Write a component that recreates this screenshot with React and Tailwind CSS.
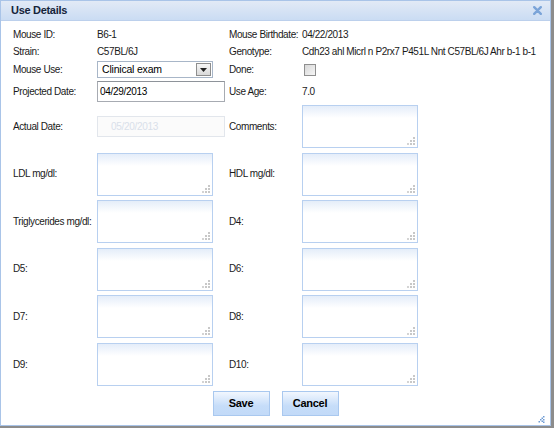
import React from "react";

const font = { fontFamily: '"Liberation Sans", Arial, sans-serif' };

const Label = ({ children }) => (
  <div className="text-[10px] tracking-[-0.4px] text-[#1a1a1a] leading-none">{children}</div>
);

const Grip = () => (
  <svg className="absolute right-[2px] bottom-[2px]" width="9" height="9" viewBox="0 0 9 9">
    <rect x="7" y="1" width="2" height="2" fill="#c8c8c8" />
    <rect x="4" y="4" width="2" height="2" fill="#c8c8c8" />
    <rect x="7" y="4" width="2" height="2" fill="#c8c8c8" />
    <rect x="1" y="7" width="2" height="2" fill="#d4d4d4" />
    <rect x="4" y="7" width="2" height="2" fill="#c8c8c8" />
    <rect x="7" y="7" width="2" height="2" fill="#c8c8c8" />
  </svg>
);

const Area = () => (
  <div className="relative w-[116px] h-[43px] border border-[#b8d0f0] bg-[linear-gradient(to_bottom,#e4edf9,#ffffff_12px)]">
    <Grip />
  </div>
);

const Row = ({ l1, v1, l2, v2, h = "h-[43px]" }) => (
  <div className={`grid grid-cols-[84px_132px_73px_1fr] items-center ${h}`}>
    <Label>{l1}</Label>
    <div>{v1}</div>
    <Label>{l2}</Label>
    <div>{v2}</div>
  </div>
);

export default function App() {
  return (
    <div className="w-[554px] h-[428px] bg-[#8c8c8c]" style={font}>
      <div className="w-[551px] h-[426px] bg-white border border-[#a9c4e8] flex flex-col">
        {/* title bar */}
        <div className="h-[22px] flex items-center justify-between pl-[10px] pr-[8px] bg-[linear-gradient(to_bottom,#e2eaf6,#cadcf3)] border-b border-[#bcd0ec]">
          <span className="text-[11px] font-bold tracking-[-0.3px] text-[#15243a]">Use Details</span>
          <svg width="9" height="9" viewBox="0 0 9 9">
            <path d="M1.2 1.2 L7.8 7.8 M7.8 1.2 L1.2 7.8" stroke="#7ba4d8" strokeWidth="2.4" strokeLinecap="round" />
          </svg>
        </div>

        <div className="pl-[12px] pt-[5px] flex flex-col">
          <Row h="h-[17px]" l1="Mouse ID:" v1={<Label>B6-1</Label>} l2="Mouse Birthdate:" v2={<Label>04/22/2013</Label>} />
          <Row h="h-[17px]" l1="Strain:" v1={<Label>C57BL/6J</Label>} l2="Genotype:" v2={<Label>Cdh23 ahl Micrl n P2rx7 P451L Nnt C57BL/6J Ahr b-1 b-1</Label>} />
          <Row
            h="h-[19px]"
            l1="Mouse Use:"
            v1={
              <div className="w-[116px] h-[17px] border border-[#a8b6c8] flex items-center justify-between pl-[4px] pr-[1px] bg-white">
                <span className="text-[10.5px] tracking-[-0.2px] text-black leading-none">Clinical exam</span>
                <div className="w-[15px] h-[13px] border border-[#8e8e8e] bg-[linear-gradient(to_bottom,#f6f6f6,#d9d9d9)] flex items-center justify-center">
                  <svg width="7" height="4" viewBox="0 0 7 4"><path d="M0 0 H7 L3.5 4 Z" fill="#222" /></svg>
                </div>
              </div>
            }
            l2="Done:"
            v2={
              <div className="ml-[2px] w-[12px] h-[12px] border border-[#8f8f8f] bg-[linear-gradient(135deg,#d8d8d8,#f6f6f6)]" />
            }
          />
          <Row
            h="h-[25px]"
            l1="Projected Date:"
            v1={
              <div className="w-[128px] h-[21px] border border-[#a7abb2] border-t-[#8e939a] flex items-center pl-[2px] bg-white">
                <span className="text-[10px] tracking-[-0.3px] text-black leading-none">04/29/2013</span>
              </div>
            }
            l2="Use Age:"
            v2={<Label>7.0</Label>}
          />
          <div className="flex flex-col gap-[4.6px] mt-[1px]">
            <Row
              l1="Actual Date:"
              v1={
                <div className="w-[128px] h-[21px] border border-[#e2e6ec] flex items-center pl-[13px] bg-[#fbfbfb]">
                  <span className="text-[10px] tracking-[-0.3px] text-[#d9e0ea] leading-none">05/20/2013</span>
                </div>
              }
              l2="Comments:"
              v2={<Area />}
            />
            <Row l1="LDL mg/dl:" v1={<Area />} l2="HDL mg/dl:" v2={<Area />} />
            <Row l1="Triglycerides mg/dl:" v1={<Area />} l2="D4:" v2={<Area />} />
            <Row l1="D5:" v1={<Area />} l2="D6:" v2={<Area />} />
            <Row l1="D7:" v1={<Area />} l2="D8:" v2={<Area />} />
            <Row l1="D9:" v1={<Area />} l2="D10:" v2={<Area />} />
          </div>
        </div>

        <div className="flex justify-center gap-[12px] mt-[5px]">
          <button className="w-[57px] h-[25px] border border-[#a9c8ef] bg-[linear-gradient(to_bottom,#f2f7fe,#c6ddf9_60%,#c2daf8)] text-[11px] font-bold tracking-[-0.3px] text-black">
            Save
          </button>
          <button className="w-[57px] h-[25px] border border-[#a9c8ef] bg-[linear-gradient(to_bottom,#f2f7fe,#c6ddf9_60%,#c2daf8)] text-[11px] font-bold tracking-[-0.3px] text-black">
            Cancel
          </button>
        </div>

        <div className="flex-1 flex items-end justify-end pr-[5px] pb-[2px]">
          <svg width="7" height="7" viewBox="0 0 7 7">
            <rect x="5" y="0" width="1.5" height="1.5" fill="#6f9bd3" />
            <rect x="3.5" y="1.5" width="1.5" height="1.5" fill="#6f9bd3" />
            <rect x="5" y="3" width="1.5" height="1.5" fill="#6f9bd3" />
            <rect x="2" y="3" width="1.5" height="1.5" fill="#6f9bd3" />
            <rect x="0.5" y="5" width="1.5" height="1.5" fill="#6f9bd3" />
            <rect x="3.5" y="4.5" width="1.5" height="1.5" fill="#6f9bd3" />
            <rect x="5" y="5.5" width="1.5" height="1.5" fill="#6f9bd3" />
          </svg>
        </div>
      </div>
    </div>
  );
}
